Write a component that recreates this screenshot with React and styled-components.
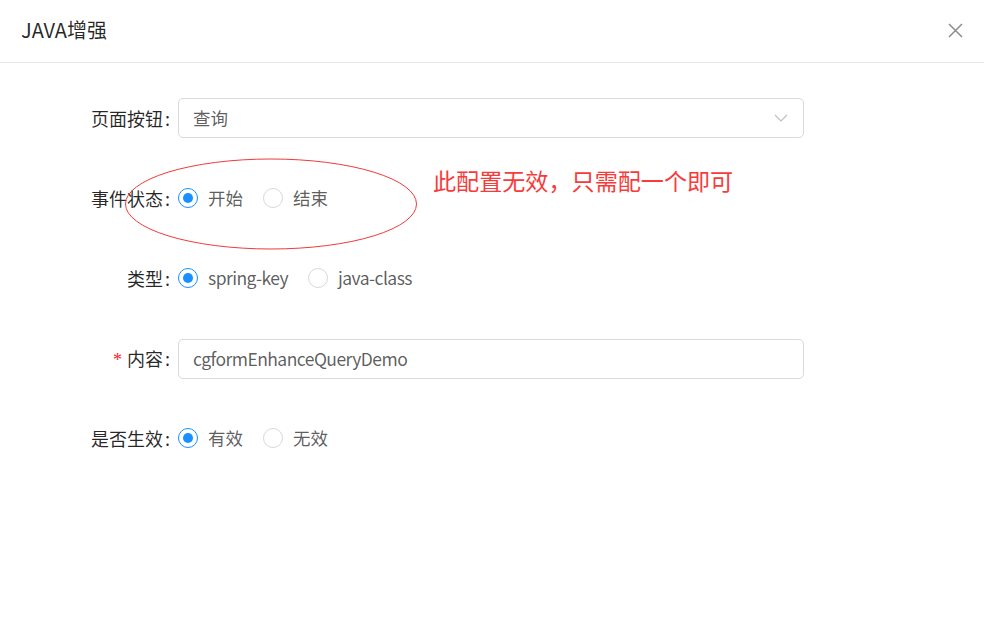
import React from "react";
import styled, { createGlobalStyle } from "styled-components";

const Global = createGlobalStyle`
  html, body { margin: 0; padding: 0; background: #fff; }
  body {
    font-family: "Noto Sans CJK SC", "Noto Sans", sans-serif;
    -webkit-font-smoothing: antialiased;
  }
  * { box-sizing: border-box; }
`;

const Modal = styled.div`
  position: relative;
  width: 984px;
  height: 638px;
  background: #fff;
`;

const Header = styled.div`
  height: 63px;
  padding: 0 21px;
  display: flex;
  align-items: center;
  justify-content: space-between;
  border-bottom: 1px solid #e8e8e8;
`;

const Title = styled.div`
  font-size: 20px;
  line-height: 24px;
  color: rgba(0, 0, 0, 0.85);
  margin-top: -2px;
`;

const Close = styled.button`
  border: 0;
  background: transparent;
  padding: 0;
  width: 16px;
  height: 16px;
  display: flex;
  align-items: center;
  justify-content: center;
  color: #8c8c8c;
  cursor: pointer;
  margin-top: -1px;
`;

const Body = styled.div`
  padding-top: 35px;
  display: flex;
  flex-direction: column;
  gap: 40px;
`;

const Row = styled.div`
  display: grid;
  grid-template-columns: 178px 626px;
  align-items: center;
  height: 40px;
`;

const Label = styled.label`
  text-align: right;
  padding-right: 8px;
  font-size: 18px;
  line-height: 40px;
  color: rgba(0, 0, 0, 0.85);
  white-space: nowrap;
`;

const Required = styled.span`
  color: #f5222d;
  font-family: "Liberation Serif", serif;
  font-size: 18px;
  margin-right: 5px;
`;

const Colon = styled.span`
  margin-left: 2px;
`;

const Field = styled.div`
  height: 40px;
  border: 1px solid #d9d9d9;
  border-radius: 5px;
  padding: 0 14px;
  display: flex;
  align-items: center;
  justify-content: space-between;
  font-size: 17.5px;
  color: rgba(0, 0, 0, 0.65);
  margin-top: -1px;
`;

const Latin = styled.span`
  letter-spacing: -0.55px;
`;

const Arrow = styled.span`
  display: flex;
  color: #bfbfbf;
  margin-right: 1px;
`;

const RadioGroup = styled.div`
  display: flex;
  align-items: center;
`;

const RadioItem = styled.label`
  display: flex;
  align-items: center;
  margin-right: 10px;
  font-size: 17.5px;
  color: rgba(0, 0, 0, 0.65);
  cursor: pointer;
`;

const Circle = styled.span`
  width: 20px;
  height: 20px;
  border-radius: 50%;
  border: 1px solid ${(p) => (p.$checked ? "#1890ff" : "#d9d9d9")};
  display: flex;
  align-items: center;
  justify-content: center;
  &::after {
    content: "";
    width: 10px;
    height: 10px;
    border-radius: 50%;
    background: #1890ff;
    display: ${(p) => (p.$checked ? "block" : "none")};
  }
`;

const RadioText = styled.span`
  padding: 0 10px;
  line-height: 24px;
`;

const Ellipse = styled.svg`
  position: absolute;
  left: 124px;
  top: 157px;
  pointer-events: none;
`;

const Note = styled.div`
  position: absolute;
  left: 433px;
  top: 165px;
  font-size: 23.1px;
  line-height: 30px;
  color: #f73b3b;
  white-space: nowrap;
`;

function Radio({ checked, children }) {
  return (
    <RadioItem>
      <Circle $checked={checked} />
      <RadioText>{children}</RadioText>
    </RadioItem>
  );
}

export default function App() {
  return (
    <>
      <Global />
      <Modal>
        <Header>
          <Title>JAVA增强</Title>
          <Close aria-label="close">
            <svg width="15" height="15" viewBox="0 0 15 15">
              <path d="M1 1 L14 14 M14 1 L1 14" stroke="currentColor" strokeWidth="1.5" fill="none" />
            </svg>
          </Close>
        </Header>
        <Body>
          <Row>
            <Label>页面按钮<Colon>:</Colon></Label>
            <Field>
              <span>查询</span>
              <Arrow>
                <svg width="14" height="8" viewBox="0 0 14 8">
                  <path d="M1 1 L7 7 L13 1" stroke="currentColor" strokeWidth="1.2" fill="none" />
                </svg>
              </Arrow>
            </Field>
          </Row>
          <Row>
            <Label>事件状态<Colon>:</Colon></Label>
            <RadioGroup>
              <Radio checked>开始</Radio>
              <Radio>结束</Radio>
            </RadioGroup>
          </Row>
          <Row>
            <Label>类型<Colon>:</Colon></Label>
            <RadioGroup>
              <Radio checked><Latin>spring-key</Latin></Radio>
              <Radio><Latin>java-class</Latin></Radio>
            </RadioGroup>
          </Row>
          <Row>
            <Label><Required>*</Required>内容<Colon>:</Colon></Label>
            <Field>
              <Latin>cgformEnhanceQueryDemo</Latin>
            </Field>
          </Row>
          <Row>
            <Label>是否生效<Colon>:</Colon></Label>
            <RadioGroup>
              <Radio checked>有效</Radio>
              <Radio>无效</Radio>
            </RadioGroup>
          </Row>
        </Body>
        <Ellipse width="296" height="96" viewBox="0 0 296 96">
          <ellipse cx="147" cy="47" rx="145.5" ry="45" fill="none" stroke="#f03a3a" strokeWidth="1" />
        </Ellipse>
        <Note>此配置无效，只需配一个即可</Note>
      </Modal>
    </>
  );
}
